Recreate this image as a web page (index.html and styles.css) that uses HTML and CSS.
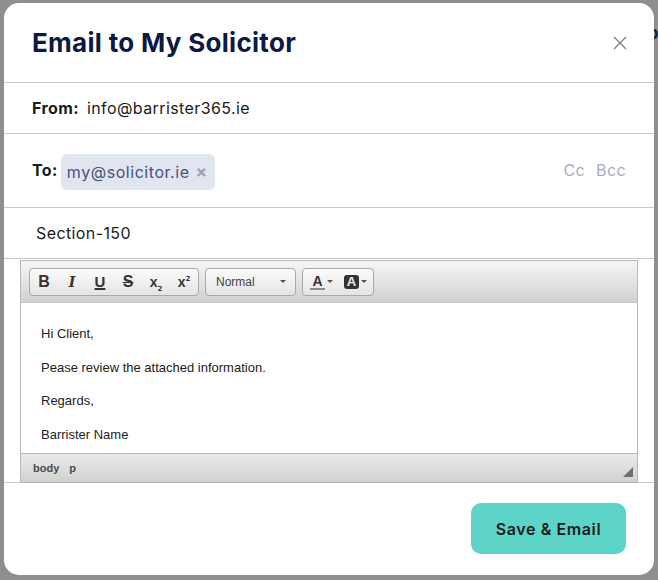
FILE: index.html
```html
<!DOCTYPE html>
<html lang="en">
<head>
  <meta charset="UTF-8" />
  <meta name="viewport" content="width=device-width, initial-scale=1.0" />
  <title>Email to My Solicitor</title>
  <link rel="stylesheet" href="styles.css">
</head>
<body>
  <span class="behind-text">o</span>
  <div class="modal">
    <div class="modal-header">
      <h1>Email to My Solicitor</h1>
      <svg class="close" width="14" height="14" viewBox="0 0 14 14"><path d="M1 1l12 12M13 1L1 13" stroke="#7d7d7d" stroke-width="1.3" fill="none"/></svg>
    </div>
    <div class="row from-row">
      <span class="label">From:</span>
      <span class="value">info@barrister365.ie</span>
    </div>
    <div class="row to-row">
      <span class="label">To:</span>
      <span class="chip">my@solicitor.ie <span class="chip-x">×</span></span>
      <span class="cc">Cc</span>
      <span class="bcc">Bcc</span>
    </div>
    <div class="row subject-row">Section-150</div>

    <div class="editor-wrap">
      <div class="editor">
        <div class="toolbar">
          <div class="tool-group">
            <span class="tool tool-b">B</span>
            <span class="tool tool-i">I</span>
            <span class="tool tool-u">U</span>
            <span class="tool tool-s">S</span>
            <span class="tool tool-x">x<sub>2</sub></span>
            <span class="tool tool-x">x<sup>2</sup></span>
          </div>
          <div class="tool-group format-select">
            <span>Normal</span>
            <span class="caret"></span>
          </div>
          <div class="tool-group color-group">
            <span class="color-btn"><span class="color-a">A</span><span class="caret"></span></span>
            <span class="color-btn"><span class="color-bg">A</span><span class="caret"></span></span>
          </div>
        </div>
        <div class="editor-body">
          <p>Hi Client,</p>
          <p>Pease review the attached information.</p>
          <p>Regards,</p>
          <p>Barrister Name</p>
        </div>
        <div class="statusbar">
          <span>body</span>
          <span>p</span>
          <svg class="resize" width="10" height="10" viewBox="0 0 10 10"><path d="M10 0v10H0z" fill="#6f6f6f"/></svg>
        </div>
      </div>
    </div>

    <div class="modal-footer">
      <button class="save-btn">Save &amp; Email</button>
    </div>
  </div>
</body>
</html>
```

FILE: styles.css
```css
* { box-sizing: border-box; }
html, body { height: 100%; }
body {
  position: relative;
  margin: 0;
  padding: 3px 4px 5px;
  background: #8f8f8f;
  font-family: Inter, "Noto Sans", sans-serif;
  color: #1b1b1b;
  overflow: hidden;
}
/* page text showing past the modal's right edge */
.behind-text {
  position: absolute;
  left: 648px;
  top: 23px;
  font-size: 17px;
  font-weight: 700;
  color: #141d3c;
}
.modal {
  position: relative;
  width: 650px;
  height: 572px;
  background: #fff;
  border-radius: 15px;
  display: flex;
  flex-direction: column;
  overflow: hidden;
}
.modal-header {
  height: 80px;
  border-bottom: 1px solid #c9c9d6;
  padding: 0 27px 0 28px;
  display: flex;
  align-items: center;
  justify-content: space-between;
}
.modal-header h1 {
  margin: 0;
  font-size: 26px;
  font-weight: 700;
  letter-spacing: 0.3px;
  color: #0b1a42;
}
.row {
  display: flex;
  align-items: center;
  padding: 0 28px;
  border-bottom: 1px solid #c9c9d6;
  font-size: 16px;
  letter-spacing: 0.4px;
}
.label { font-weight: 700; }
.from-row { height: 51px; gap: 8px; }
.to-row { height: 74px; gap: 3px; padding-top: 2px; }
.to-row .label { margin-top: -4px; }
.subject-row { height: 51px; padding-left: 32px; }
.chip {
  display: flex;
  align-items: center;
  gap: 6px;
  height: 36px;
  padding: 0 7px 0 6px;
  background: #e1e5f0;
  border-radius: 6px;
  color: #46537d;
  letter-spacing: 0.55px;
}
.chip-x { font-weight: 700; color: #a3a3a3; font-size: 17px; }
.cc { margin-left: auto; color: #a4adc6; padding-right: 8px; margin-top: -4px; }
.bcc { color: #a4adc6; margin-top: -4px; }
.editor-wrap { padding: 1px 16px 0; height: 225px; border-bottom: 1px solid #c9c9d6; border-top: 1px solid #c3c3d2; margin-top: -1px; }
.editor {
  height: 223px;
  border: 1px solid #b9b9b9;
  border-bottom-color: #b0b0bb;
  display: flex;
  flex-direction: column;
}
.toolbar {
  flex: none;
  height: 42px;
  display: flex;
  align-items: center;
  gap: 6px;
  padding: 0 8px;
  background: linear-gradient(#f6f6f6, #cfd1cf);
  border-bottom: 1px solid #c4c4c4;
}
.tool-group {
  height: 28px;
  display: flex;
  align-items: center;
  border: 1px solid #a9a9a9;
  border-radius: 4px;
  background: linear-gradient(#fbfbfb, #e4e4e4);
  font-family: "Liberation Sans", Arial, sans-serif;
  color: #333;
}
.tool { width: 28px; text-align: center; font-weight: 700; line-height: 26px; }
.tool-b { font-size: 16px; }
.tool-i { font-style: italic; font-family: "DejaVu Serif", serif; font-size: 14px; }
.tool-u { font-size: 15px; text-decoration: underline; text-decoration-thickness: 2px; }
.tool-s { font-size: 16px; text-decoration: line-through; }
.tool-x { font-size: 14px; }
.tool-x sub, .tool-x sup { font-size: 7px; line-height: 0; font-family: "DejaVu Sans", sans-serif; }
.format-select {
  width: 91px;
  justify-content: space-between;
  padding: 0 9px 0 10px;
  font-size: 12px;
  color: #444;
}
.caret {
  display: inline-block;
  border-top: 3px solid #555;
  border-left: 3px solid transparent;
  border-right: 3px solid transparent;
}
.color-group { width: 72px; padding: 0 7px; gap: 11px; }
.color-btn { display: flex; align-items: center; gap: 2px; }
.color-a {
  font-size: 14px;
  font-weight: 700;
  line-height: 14px;
  width: 15px;
  text-align: center;
  border-bottom: 2px solid #8a8a94;
}
.color-bg {
  font-size: 13px;
  font-weight: 700;
  line-height: 14px;
  width: 15px;
  text-align: center;
  color: #eee;
  background: #333;
  border-radius: 3px;
}
.editor-body {
  flex: 1;
  min-height: 0;
  padding: 24px 20px 0;
  font-family: "Liberation Sans", Arial, sans-serif;
  font-size: 13px;
  color: #222;
  background: #fff;
  border-bottom: 1px solid #b9b9b9;
}
.editor-body p { margin: 0 0 19.7px; line-height: 14px; }
.editor-body p:last-child { margin-bottom: 0; }
.statusbar {
  flex: none;
  height: 28px;
  display: flex;
  align-items: center;
  gap: 10px;
  padding: 0 12px;
  background: linear-gradient(#e9e9e9, #d0d2d0);
  font-family: "Liberation Sans", Arial, sans-serif;
  font-size: 11px;
  font-weight: 700;
  color: #4a4a4a;
}
.resize { margin-left: auto; margin-top: 8px; margin-right: -8px; }
.modal-footer {
  flex: 1;
  display: flex;
  justify-content: flex-end;
  align-items: flex-start;
  padding: 20px 28px 0;
}
.save-btn {
  width: 155px;
  height: 51px;
  border: 0;
  border-radius: 10px;
  background: #5cd5c8;
  font-family: Inter, "Noto Sans", sans-serif;
  font-size: 16px;
  font-weight: 600;
  letter-spacing: 0.6px;
  color: #1b1b1b;
}
```
